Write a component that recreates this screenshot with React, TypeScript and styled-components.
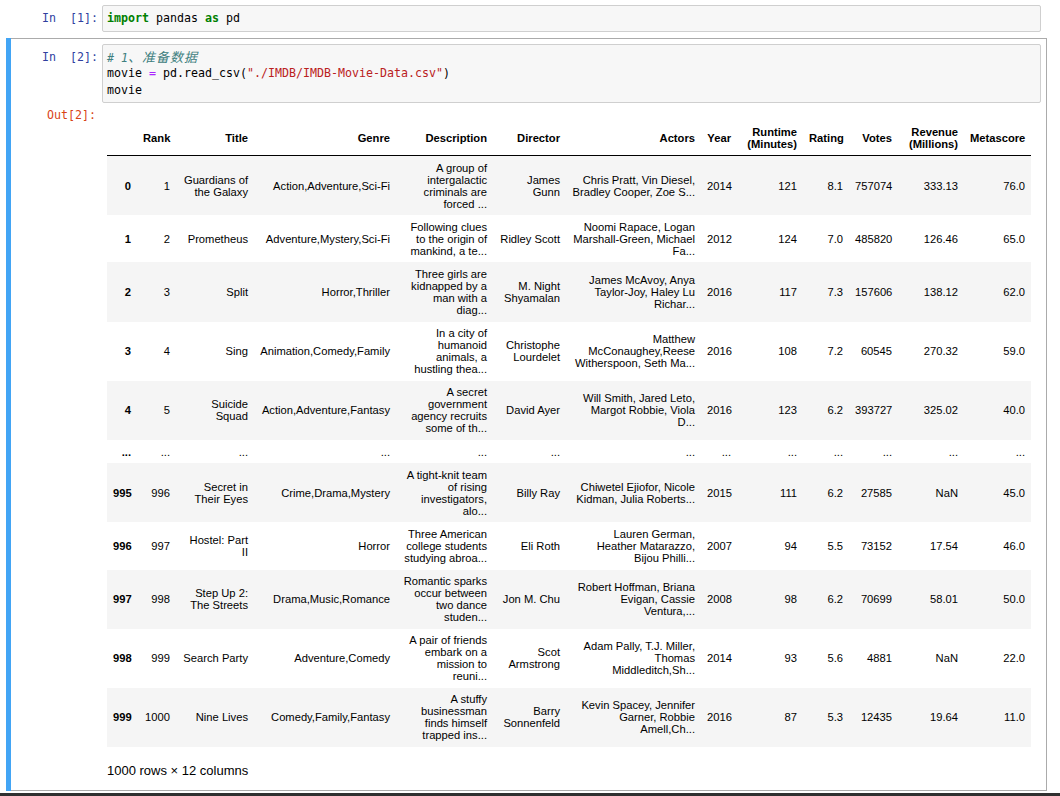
import React from 'react';
import styled, { createGlobalStyle } from 'styled-components';

const GlobalStyle = createGlobalStyle`
    html, body {
        margin: 0;
        padding: 0;
        background: #ffffff;
    }
    body {
        font-family: 'Liberation Sans', Arial, sans-serif;
        color: #000;
    }
`;

type Row = string[];

const widths = [30, 39, 78, 142, 97, 73, 135, 36, 66, 46, 49, 66, 67];

const headers = [
    '',
    'Rank',
    'Title',
    'Genre',
    'Description',
    'Director',
    'Actors',
    'Year',
    'Runtime\n(Minutes)',
    'Rating',
    'Votes',
    'Revenue\n(Millions)',
    'Metascore',
];

const rows: Row[] = [
    ['0', '1', 'Guardians of\nthe Galaxy', 'Action,Adventure,Sci-Fi', 'A group of\nintergalactic\ncriminals are\nforced ...', 'James\nGunn', 'Chris Pratt, Vin Diesel,\nBradley Cooper, Zoe S...', '2014', '121', '8.1', '757074', '333.13', '76.0'],
    ['1', '2', 'Prometheus', 'Adventure,Mystery,Sci-Fi', 'Following clues\nto the origin of\nmankind, a te...', 'Ridley Scott', 'Noomi Rapace, Logan\nMarshall-Green, Michael\nFa...', '2012', '124', '7.0', '485820', '126.46', '65.0'],
    ['2', '3', 'Split', 'Horror,Thriller', 'Three girls are\nkidnapped by a\nman with a\ndiag...', 'M. Night\nShyamalan', 'James McAvoy, Anya\nTaylor-Joy, Haley Lu\nRichar...', '2016', '117', '7.3', '157606', '138.12', '62.0'],
    ['3', '4', 'Sing', 'Animation,Comedy,Family', 'In a city of\nhumanoid\nanimals, a\nhustling thea...', 'Christophe\nLourdelet', 'Matthew\nMcConaughey,Reese\nWitherspoon, Seth Ma...', '2016', '108', '7.2', '60545', '270.32', '59.0'],
    ['4', '5', 'Suicide\nSquad', 'Action,Adventure,Fantasy', 'A secret\ngovernment\nagency recruits\nsome of th...', 'David Ayer', 'Will Smith, Jared Leto,\nMargot Robbie, Viola\nD...', '2016', '123', '6.2', '393727', '325.02', '40.0'],
    ['...', '...', '...', '...', '...', '...', '...', '...', '...', '...', '...', '...', '...'],
    ['995', '996', 'Secret in\nTheir Eyes', 'Crime,Drama,Mystery', 'A tight-knit team\nof rising\ninvestigators,\nalo...', 'Billy Ray', 'Chiwetel Ejiofor, Nicole\nKidman, Julia Roberts...', '2015', '111', '6.2', '27585', 'NaN', '45.0'],
    ['996', '997', 'Hostel: Part\nII', 'Horror', 'Three American\ncollege students\nstudying abroa...', 'Eli Roth', 'Lauren German,\nHeather Matarazzo,\nBijou Philli...', '2007', '94', '5.5', '73152', '17.54', '46.0'],
    ['997', '998', 'Step Up 2:\nThe Streets', 'Drama,Music,Romance', 'Romantic sparks\noccur between\ntwo dance\nstuden...', 'Jon M. Chu', 'Robert Hoffman, Briana\nEvigan, Cassie\nVentura,...', '2008', '98', '6.2', '70699', '58.01', '50.0'],
    ['998', '999', 'Search Party', 'Adventure,Comedy', 'A pair of friends\nembark on a\nmission to\nreuni...', 'Scot\nArmstrong', 'Adam Pally, T.J. Miller,\nThomas\nMiddleditch,Sh...', '2014', '93', '5.6', '4881', 'NaN', '22.0'],
    ['999', '1000', 'Nine Lives', 'Comedy,Family,Fantasy', 'A stuffy\nbusinessman\nfinds himself\ntrapped ins...', 'Barry\nSonnenfeld', 'Kevin Spacey, Jennifer\nGarner, Robbie\nAmell,Ch...', '2016', '87', '5.3', '12435', '19.64', '11.0'],
];

const App: React.FC = () => {
    return (
        <StyledPage>
            <GlobalStyle />
            <StyledNotebook>
                <StyledCell>
                    <StyledRow>
                        <StyledPrompt $kind="in">{'In  [1]:'}</StyledPrompt>
                        <StyledInput>
                            <StyledCodeLine>
                                <StyledKeyword>import</StyledKeyword> pandas <StyledKeyword>as</StyledKeyword> pd
                            </StyledCodeLine>
                        </StyledInput>
                    </StyledRow>
                </StyledCell>

                <StyledCell $selected>
                    <StyledRow>
                        <StyledPrompt $kind="in">{'In  [2]:'}</StyledPrompt>
                        <StyledInput>
                            <StyledCodeLine>
                                <StyledComment>
                                    # 1<StyledCjk>、准备数据</StyledCjk>
                                </StyledComment>
                            </StyledCodeLine>
                            <StyledCodeLine>
                                movie <StyledOperator>=</StyledOperator> pd.read_csv(
                                <StyledString>"./IMDB/IMDB-Movie-Data.csv"</StyledString>)
                            </StyledCodeLine>
                            <StyledCodeLine>movie</StyledCodeLine>
                        </StyledInput>
                    </StyledRow>
                    <StyledRow>
                        <StyledPrompt $kind="out">Out[2]:</StyledPrompt>
                        <StyledOutput>
                            <StyledTable>
                                <colgroup>
                                    {widths.map((w, i) => (
                                        <StyledCol key={i} $w={w} />
                                    ))}
                                </colgroup>
                                <thead>
                                    <tr>
                                        {headers.map((h, i) => (
                                            <StyledHeadCell key={i}>{h}</StyledHeadCell>
                                        ))}
                                    </tr>
                                </thead>
                                <tbody>
                                    {rows.map((r, i) => (
                                        <StyledBodyRow key={i}>
                                            <StyledIndexCell>{r[0]}</StyledIndexCell>
                                            {r.slice(1).map((c, j) => (
                                                <StyledDataCell key={j}>{c}</StyledDataCell>
                                            ))}
                                        </StyledBodyRow>
                                    ))}
                                </tbody>
                            </StyledTable>
                            <StyledShape>1000 rows × 12 columns</StyledShape>
                        </StyledOutput>
                    </StyledRow>
                </StyledCell>
            </StyledNotebook>
            <StyledScrollBar />
        </StyledPage>
    );
};

const StyledPage = styled.div`
    height: 796px;
    display: flex;
    flex-direction: column;
    overflow: hidden;
    background: #ffffff;
`;

const StyledNotebook = styled.div`
    flex: 1;
    min-height: 0;
    overflow: hidden;
    padding: 0 13px 0 6px;
    margin-top: -1px;
`;

const StyledCell = styled.div<{ $selected?: boolean }>`
    position: relative;
    border: 1px solid ${({ $selected }) => ($selected ? '#ababab' : 'transparent')};
    padding: 5px;
    &::before {
        content: '';
        display: ${({ $selected }) => ($selected ? 'block' : 'none')};
        position: absolute;
        left: -1px;
        top: -1px;
        width: 5px;
        height: calc(100% + 2px);
        background: #42a5f5;
    }
`;

const StyledRow = styled.div`
    display: flex;
    flex-direction: row;
    align-items: flex-start;
`;

const StyledPrompt = styled.div<{ $kind: 'in' | 'out' }>`
    width: 90px;
    flex: none;
    box-sizing: border-box;
    padding: ${({ $kind }) => ($kind === 'in' ? '5px 4px 0 0' : '4px 6px 0 0')};
    text-align: right;
    white-space: pre;
    font-family: 'DejaVu Sans Mono', 'Liberation Mono', monospace;
    font-size: 11.63px;
    line-height: 16.5px;
    color: ${({ $kind }) => ($kind === 'in' ? '#303f9f' : '#d84315')};
`;

const StyledInput = styled.div`
    flex: 1;
    min-width: 0;
    background: #f7f7f7;
    border: 1px solid #cfcfcf;
    border-radius: 2px;
    padding: 4px;
`;

const StyledCodeLine = styled.div`
    font-family: 'DejaVu Sans Mono', 'Liberation Mono', monospace;
    font-size: 11.63px;
    line-height: 16.5px;
    height: 16.5px;
    white-space: pre;
    color: #000;
`;

const StyledKeyword = styled.span`
    color: #008000;
    font-weight: bold;
`;

const StyledOperator = styled.span`
    color: #aa22ff;
`;

const StyledString = styled.span`
    color: #ba2121;
`;

const StyledComment = styled.span`
    color: #408080;
    font-style: italic;
`;

const StyledCjk = styled.span`
    font-family: 'Noto Sans CJK SC', sans-serif;
    font-size: 13px;
    letter-spacing: 1px;
`;

const StyledOutput = styled.div`
    flex: 1;
    min-width: 0;
    padding: 4px 0 0 5px;
`;

const StyledTable = styled.table`
    margin-top: 13px;
    border-collapse: collapse;
    table-layout: fixed;
    width: 924px;
    font-family: 'Liberation Sans', Arial, sans-serif;
    font-size: 11.2px;
    color: #000;
`;

const StyledCol = styled.col<{ $w: number }>`
    width: ${({ $w }) => $w}px;
`;

const StyledHeadCell = styled.th`
    padding: 5.5px 6px;
    line-height: 12px;
    text-align: right;
    vertical-align: middle;
    font-weight: bold;
    white-space: pre;
    border-bottom: 1px solid #000;
`;

const StyledBodyRow = styled.tr`
    &:nth-child(odd) {
        background: #f5f5f5;
    }
`;

const StyledIndexCell = styled.th`
    padding: 5.6px 6px;
    line-height: 12px;
    text-align: right;
    vertical-align: middle;
    font-weight: bold;
    white-space: pre;
`;

const StyledDataCell = styled.td`
    padding: 5.6px 6px;
    line-height: 12px;
    text-align: right;
    vertical-align: middle;
    white-space: pre;
`;

const StyledShape = styled.p`
    margin: 16px 0 7px;
    font-family: 'Liberation Sans', Arial, sans-serif;
    font-size: 13px;
    line-height: 15px;
    color: #000;
`;

const StyledScrollBar = styled.div`
    flex: none;
    height: 3px;
    margin-top: 2px;
    background: #303030;
`;

export default App;
